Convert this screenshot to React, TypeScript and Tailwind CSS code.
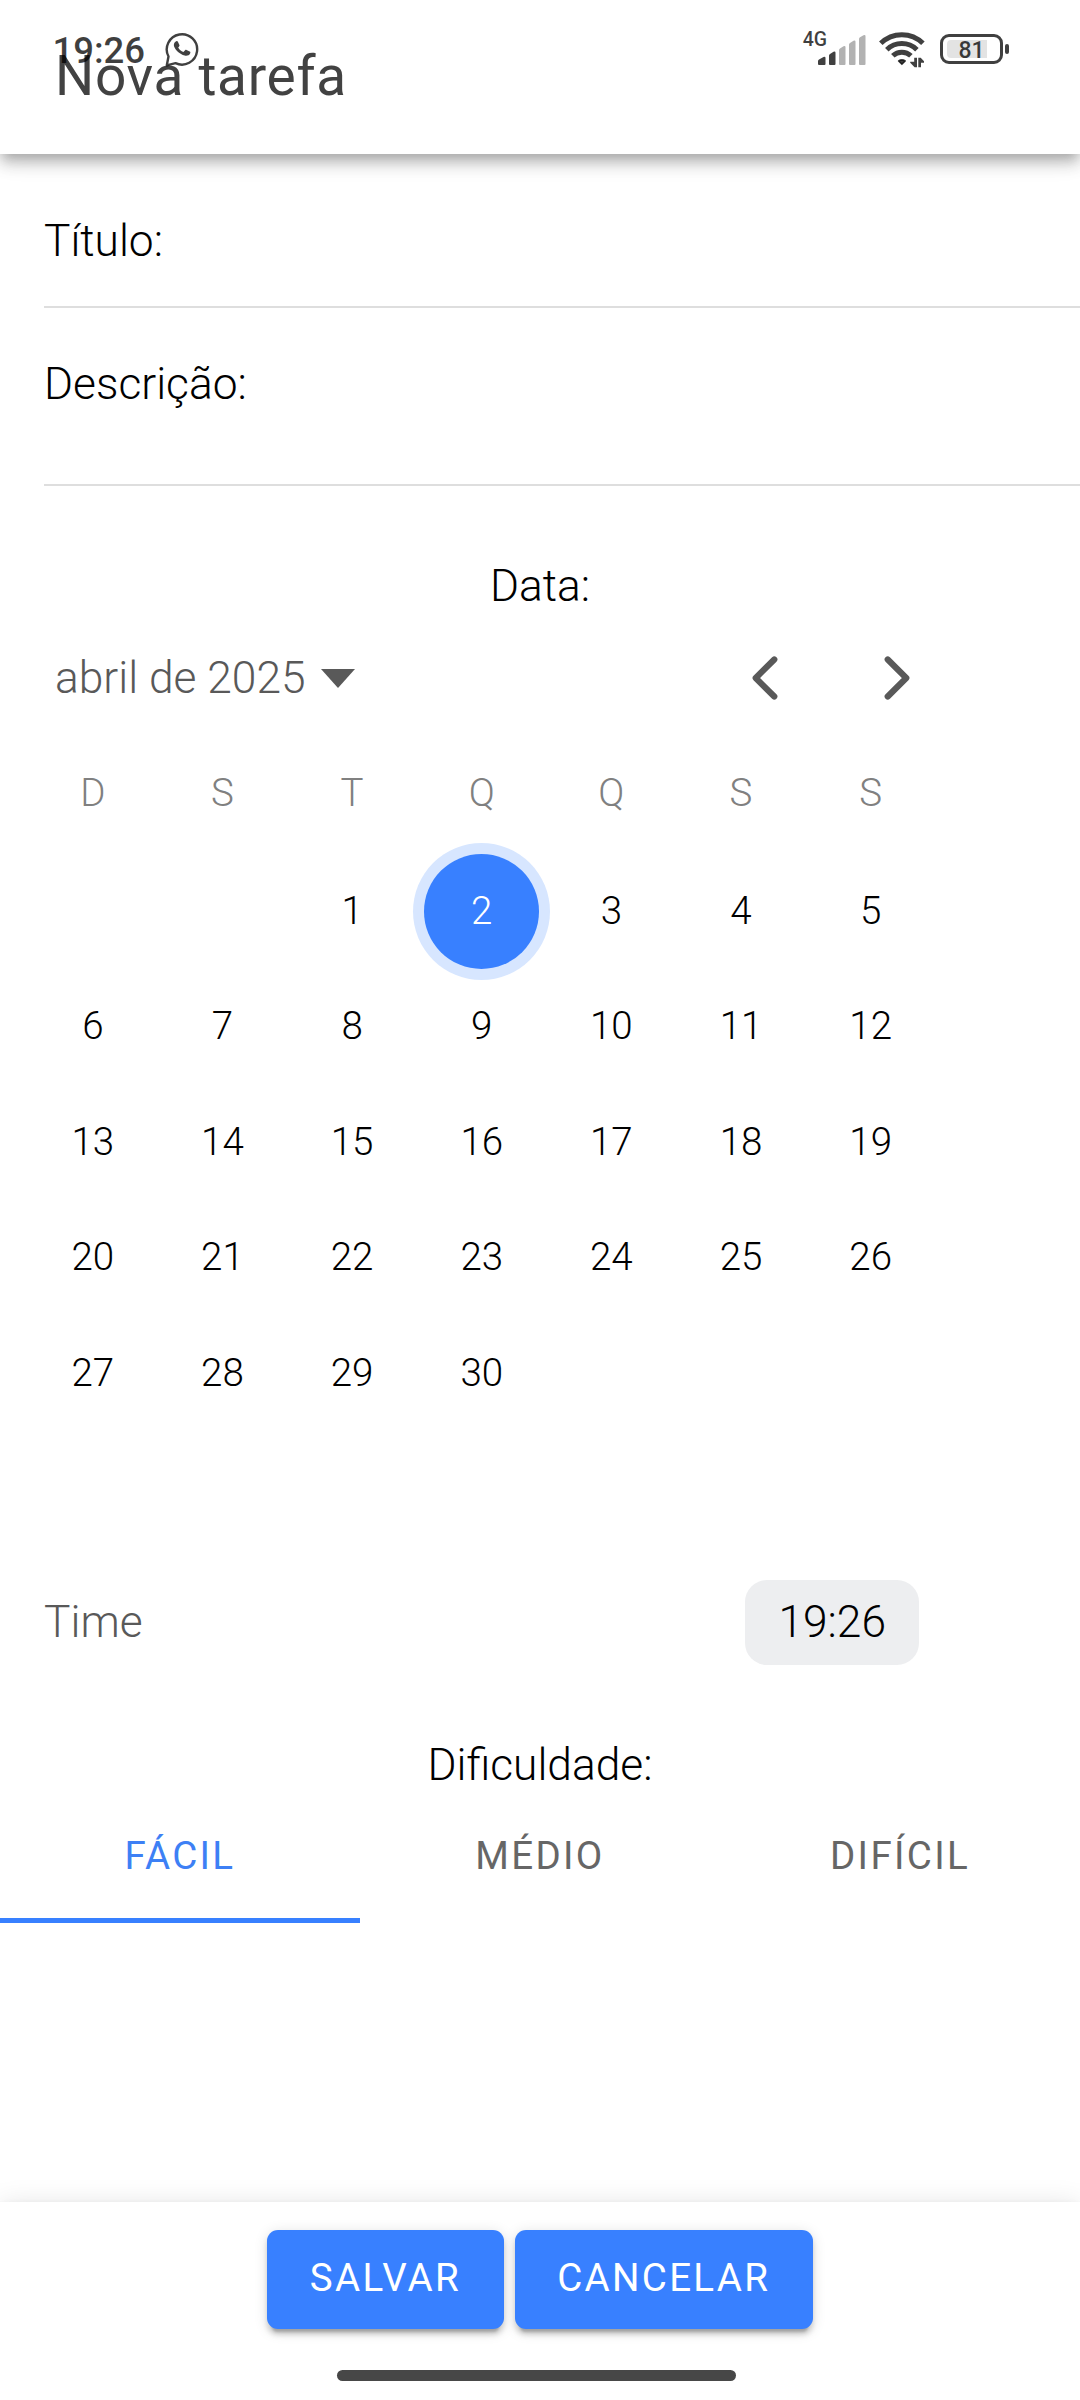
import React from "react";

const WEEKDAYS = ["D", "S", "T", "Q", "Q", "S", "S"];
const LEADING_BLANKS = 2;
const DAYS = Array.from({ length: 30 }, (_, i) => i + 1);
const SELECTED_DAY = 2;

function WhatsAppIcon() {
  return (
    <svg viewBox="0 0 34 35" className="h-[35px] w-[34px]" fill="none">
      <path
        d="M3.5 24.5A15.2 15.2 0 1 1 10.5 31.200L1.800 33.300Z"
        stroke="currentColor"
        strokeWidth="2.4"
        strokeLinejoin="round"
      />
      <path
        d="M11.3 9.200c.8-.3 1.400 0 1.700.7l1.400 3.100c.3.8-.1 1.300-1.200 2.400 1.100 2.200 2.900 3.800 5.200 4.600l1.700-1.800c.4-.5.9-.5 1.400-.3l3.200 1.500c.8.4.8 1 .5 1.800-.9 2.300-3.500 2.900-5.500 2.300-5.200-1.400-8.900-4.900-10.600-9-.8-2.200.3-4.700 2.200-5.300z"
        fill="currentColor"
      />
    </svg>
  );
}

function SignalIcon() {
  return (
    <svg viewBox="0 0 48 31" className="h-[31px] w-[48px]" fill="currentColor">
      <path d="M0 26Q0 25 1 24.500L5.500 22Q7.500 21.300 7.500 23V29Q7.500 30 6.500 30H1Q0 30 0 29Z" />
      <path d="M11 20.500Q11 19.500 12 19L15.500 16.700Q17.500 16 17.500 17.700V29Q17.500 30 16.500 30H12Q11 30 11 29Z" />
      <g opacity="0.4">
        <path d="M21 15Q21 14 22 13.500L25.500 11.300Q27.500 10.500 27.500 12.300V29Q27.500 30 26.500 30H22Q21 30 21 29Z" />
        <path d="M31 9.500Q31 8.500 32 8L35.500 5.700Q37.500 5 37.500 6.700V29Q37.500 30 36.500 30H32Q31 30 31 29Z" />
        <path d="M41 4Q41 3 42 2.300L45.500 .3Q47.500-.4 47.500 1.200V29Q47.500 30 46.500 30H42Q41 30 41 29Z" />
      </g>
    </svg>
  );
}

function WifiIcon() {
  return (
    <svg viewBox="0 0 46 37" className="h-[37px] w-[46px]" fill="none" stroke="currentColor" strokeWidth="5">
      <path d="M1.800 12.300A30 30 0 0 1 43.900 12.300" />
      <path d="M7.800 18.700A21.500 21.500 0 0 1 37.900 18.700" />
      <path d="M13.800 24.800A13 13 0 0 1 31.900 24.800" />
      <path
        d="M19.600 30Q22.900 27.800 26.200 30L22.900 33.300Z"
        fill="currentColor"
        strokeWidth="1.600"
        strokeLinejoin="round"
      />
      <g fill="currentColor" stroke="none">
        <path d="M35.200 26.800H38V36.200H35.600L31.200 31.700V30.800H35.200Z" />
        <path d="M39.300 36.200V26.800H41.700L45 30.200V31.700H42V36.200Z" />
      </g>
    </svg>
  );
}

function Battery() {
  return (
    <div className="flex items-center gap-[2px]">
      <div className="flex h-[30px] w-[63px] items-center rounded-[9px] border-[3px] border-current px-[4px]">
        <div className="flex h-[18px] w-[40px] justify-center rounded-l-[4px] bg-black/11">
          <span className="mt-px ml-[9px] text-[23px] leading-[20px] font-medium">81</span>
        </div>
      </div>
      <div className="h-[10px] w-[4px] rounded-[2px] bg-current" />
    </div>
  );
}

function StatusBar() {
  return (
    <div className="absolute inset-x-0 top-0 flex h-[98px] items-start pl-[52.5px] pr-[71px] text-black/75">
      <span className="mt-[29px] w-[94px] text-[36.5px] leading-[44px] font-medium">19:26</span>
      <div className="mt-[31.5px] ml-[18.5px]">
        <WhatsAppIcon />
      </div>
      <div className="ml-auto flex items-start">
        <span className="mt-[28px] text-[19.5px] leading-[24px] font-medium">4G</span>
        <div className="mt-[34.5px] ml-[-9px]">
          <SignalIcon />
        </div>
        <div className="mt-[31px] ml-[13px]">
          <WifiIcon />
        </div>
        <div className="mt-[34px] ml-[15px]">
          <Battery />
        </div>
      </div>
    </div>
  );
}

function Chevron({ d }: { d: string }) {
  return (
    <svg viewBox="0 0 512 512" className="size-[66px]" fill="none">
      <path d={d} stroke="currentColor" strokeWidth="48" strokeLinecap="round" strokeLinejoin="round" />
    </svg>
  );
}

function Calendar() {
  return (
    <section className="w-[962.5px]">
      <div className="flex h-[110px] items-center pr-[32.5px] pl-[55px] text-[#595959]">
        <span className="text-[44.3px] leading-[52px]">abril de 2025</span>
        <svg viewBox="0 0 34 19" className="ml-[15px] h-[19px] w-[34px]" fill="currentColor">
          <path d="M0 0H34L17 19Z" />
        </svg>
        <div className="ml-auto flex gap-[66px] pb-[1px]">
          <Chevron d="M328 112L184 256l144 144" />
          <Chevron d="M184 112l144 144-144 144" />
        </div>
      </div>
      <div className="grid grid-cols-7 pr-[27px] pl-[28px] pt-[32px] text-center text-[38.5px] leading-[56px] text-[#808080]">
        {WEEKDAYS.map((d, i) => (
          <span key={i}>{d}</span>
        ))}
      </div>
      <div className="mt-[32.5px] grid grid-cols-7 justify-items-center pr-[27px] pl-[28px] text-[38.5px]">
        {Array.from({ length: LEADING_BLANKS }, (_, i) => (
          <span key={"b" + i} />
        ))}
        {DAYS.map((d) => (
          <button
            key={d}
            className={
              d === SELECTED_DAY
                ? "size-[115.5px] rounded-full bg-[#3880ff] pb-[1px] text-white shadow-[0_0_0_11px_rgba(56,128,255,0.2)]"
                : "size-[115.5px] rounded-full pb-[1px]"
            }
          >
            {d}
          </button>
        ))}
      </div>
    </section>
  );
}

const BUTTON =
  "h-[99px] rounded-[11px] bg-[#3880ff] px-[42.6px] pb-[4px] text-[38.5px] leading-[45px] font-normal tracking-[0.06em] text-white shadow-[0_8.25px_2.75px_-5.5px_rgba(0,0,0,0.2),0_5.5px_5.5px_0_rgba(0,0,0,0.14),0_2.75px_13.75px_0_rgba(0,0,0,0.12)]";

export default function App() {
  return (
    <div className="relative flex h-[2400px] w-[1080px] flex-col overflow-hidden bg-white font-['Roboto',sans-serif] font-light text-black">
      <header className="relative z-10 h-[154px] shrink-0 bg-white pl-[55px] shadow-[0_5.5px_11px_-2.75px_rgba(0,0,0,0.2),0_11px_13.75px_0_rgba(0,0,0,0.14),0_2.75px_27.5px_0_rgba(0,0,0,0.12)]">
        <h1 className="text-[55px] leading-[152px] font-normal tracking-[0.0125em] text-[#424242]">Nova tarefa</h1>
        <StatusBar />
      </header>

      <main className="flex-1 text-[44.3px] leading-[52px]">
        <div className="ml-[44px] h-[154px] border-b-2 border-[#dedede] pt-[61px]">Título:</div>
        <div className="ml-[44px] h-[178px] border-b-2 border-[#dedede] pt-[50px]">Descrição:</div>

        <div className="pt-[74px] text-center">Data:</div>
        <div className="pt-[11px]">
          <Calendar />
        </div>

        <div className="mt-[149px] ml-[44px] flex h-[85px] w-[875px] items-center justify-between">
          <span className="pb-[2px] text-[#595959]">Time</span>
          <button className="h-[85px] rounded-[22px] bg-[#edeef0] px-[33px] pb-[2px]">19:26</button>
        </div>

        <div className="pt-[74px] text-center">Dificuldade:</div>
        <div className="mt-[1px] grid h-[131px] grid-cols-3 text-center text-[38.5px] leading-[124px] font-normal tracking-[0.06em] text-[#666666]">
          <button className="border-b-[5px] border-[#3880ff] pt-[2px] text-[#3d80f5]">FÁCIL</button>
          <button className="border-b-[5px] border-transparent pt-[2px]">MÉDIO</button>
          <button className="border-b-[5px] border-transparent pt-[2px]">DIFÍCIL</button>
        </div>
      </main>

      <footer className="relative flex h-[198px] shrink-0 flex-col bg-white pt-[28px] shadow-[0_5.5px_11px_-2.75px_rgba(0,0,0,0.2),0_11px_13.75px_0_rgba(0,0,0,0.14),0_2.75px_27.5px_0_rgba(0,0,0,0.12)]">
        <div className="flex justify-center gap-[11px]">
          <button className={BUTTON}>SALVAR</button>
          <button className={BUTTON}>CANCELAR</button>
        </div>
        <div className="mt-[41px] ml-[337px] h-[11px] w-[399px] rounded-full bg-[#474747]" />
      </footer>
    </div>
  );
}
